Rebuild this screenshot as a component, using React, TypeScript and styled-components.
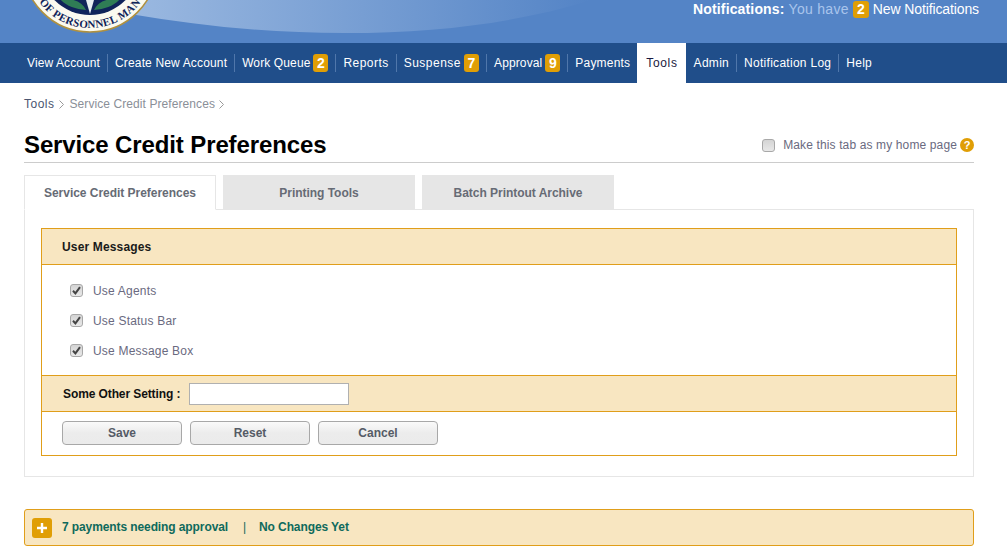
import React from 'react';
import styled, { createGlobalStyle } from 'styled-components';

const GlobalStyle = createGlobalStyle`
  html, body {
    margin: 0;
    padding: 0;
    background: #fff;
    font-family: "Liberation Sans", Arial, sans-serif;
    font-size: 12px;
  }
`;

const Page = styled.div`
  width: 1007px;
  height: 557px;
  overflow: hidden;
`;

// Header
const Header = styled.header`
  position: relative;
  height: 43px;
  background: #5484c6;
  overflow: hidden;
`;

const HeaderArt = styled.svg`
  position: absolute;
  left: 0;
  top: 0;
`;

const Notifications = styled.div`
  position: absolute;
  left: 693px;
  top: 0;
  height: 18px;
  display: flex;
  align-items: center;
  font-size: 14px;
  color: #fff;
  white-space: nowrap;
`;

const NotifyLabel = styled.b`
  margin-right: 4px;
  letter-spacing: 0.15px;
`;

const NotifyMuted = styled.span`
  color: #a9c5ec;
  margin-right: 4px;
  letter-spacing: 0.3px;
`;

const NotifyText = styled.span`
  letter-spacing: -0.12px;
`;

const Badge = styled.span<{ $big?: boolean }>`
  display: inline-flex;
  align-items: center;
  justify-content: center;
  width: ${(p) => (p.$big ? 16 : 15)}px;
  height: ${(p) => (p.$big ? 17 : 18)}px;
  margin-left: ${(p) => (p.$big ? 0 : 3)}px;
  margin-right: ${(p) => (p.$big ? 4 : 0)}px;
  background: #e09e05;
  border-radius: 3px;
  color: #fff;
  font-size: 14px;
  font-weight: bold;
  letter-spacing: 0;
`;

// Main nav
const Nav = styled.nav`
  display: flex;
  align-items: center;
  height: 40px;
  padding-left: 19px;
  background: #204e8a;
`;

const NavItem = styled.a<{ $sep?: boolean; $active?: boolean; $track: number }>`
  display: flex;
  align-items: center;
  height: ${(p) => (p.$active ? 40 : 18)}px;
  padding: 0 ${(p) => (p.$active ? 8 : 7)}px;
  border-left: 1px solid ${(p) => (p.$sep ? '#5077ab' : 'transparent')};
  background: ${(p) => (p.$active ? '#fff' : 'transparent')};
  color: ${(p) => (p.$active ? '#1a1a40' : '#fff')};
  white-space: nowrap;
  letter-spacing: ${(p) => p.$track}px;
`;

// Content
const Main = styled.main`
  width: 950px;
  margin-left: 24px;
`;

const Breadcrumb = styled.div`
  display: flex;
  align-items: center;
  height: 14px;
  margin-top: 14px;
  color: #8a8f98;
`;

const Crumb = styled.span<{ $link?: boolean }>`
  color: ${(p) => (p.$link ? '#4a5570' : '#8a8f98')};
  letter-spacing: ${(p) => (p.$link ? 0.5 : 0.08)}px;
`;

const CrumbArrow = styled.svg`
  margin: 0 6px 0 4px;
`;

const TitleRow = styled.div`
  display: flex;
  align-items: center;
  justify-content: space-between;
  height: 22px;
  margin-top: 23px;
  padding-bottom: 6px;
  border-bottom: 1px solid #ccc;
`;

const Title = styled.h1`
  margin: 0;
  font-size: 24px;
  font-weight: bold;
  letter-spacing: -0.12px;
  color: #000;
`;

const HomeToggle = styled.label`
  display: flex;
  align-items: center;
  color: #6a6a80;
  letter-spacing: 0.13px;
`;

const Box = styled.span<{ $size?: number }>`
  display: flex;
  align-items: center;
  justify-content: center;
  box-sizing: border-box;
  width: ${(p) => p.$size ?? 13}px;
  height: ${(p) => p.$size ?? 13}px;
  border: 1px solid #a8a8a8;
  border-radius: 3px;
  background: linear-gradient(#d4d4d4, #e8e8e8);
`;

const HomeBox = styled(Box)`
  margin-right: 8px;
`;

const Help = styled.span`
  display: flex;
  align-items: center;
  justify-content: center;
  width: 14px;
  height: 14px;
  margin-left: 3px;
  border-radius: 50%;
  background: #e09e05;
  color: #fff;
  font-size: 11px;
  font-weight: bold;
  letter-spacing: 0;
`;

const Tabs = styled.div`
  display: flex;
  gap: 7px;
  height: 35px;
  margin-top: 12px;
  position: relative;
  z-index: 1;
`;

const Tab = styled.div<{ $active?: boolean }>`
  display: flex;
  align-items: center;
  justify-content: center;
  box-sizing: border-box;
  width: 192px;
  height: 35px;
  background: ${(p) => (p.$active ? '#fff' : '#e6e6e6')};
  border: 1px solid #e6e6e6;
  border-bottom: ${(p) => (p.$active ? '1px solid #fff' : '1px solid #e6e6e6')};
  color: #666b75;
  font-weight: bold;
  letter-spacing: -0.03px;
`;

const Panel = styled.section`
  box-sizing: border-box;
  height: 268px;
  margin-top: -1px;
  padding: 18px 16px 0;
  border: 1px solid #e6e6e6;
`;

const Card = styled.div`
  box-sizing: border-box;
  height: 228px;
  border: 1px solid #e09e1a;
`;

const CardHead = styled.div`
  display: flex;
  align-items: center;
  height: 35px;
  padding-left: 20px;
  border-bottom: 1px solid #e09e1a;
  background: #f8e6c1;
  color: #1a1a1a;
  font-weight: bold;
  letter-spacing: 0.15px;
`;

const Options = styled.div`
  display: flex;
  flex-direction: column;
  gap: 17px;
  height: 110px;
  box-sizing: border-box;
  padding: 19px 0 0 28px;
`;

const Option = styled.label`
  display: flex;
  align-items: center;
  height: 13px;
  color: #6a6a80;
  letter-spacing: 0.2px;
`;

const OptionBox = styled(Box)`
  margin-right: 10px;
`;

const SettingRow = styled.div`
  display: flex;
  align-items: center;
  height: 35px;
  padding-left: 21px;
  border-top: 1px solid #e09e1a;
  border-bottom: 1px solid #e09e1a;
  background: #f8e6c1;
  color: #111;
  font-weight: bold;
  letter-spacing: -0.1px;
`;

const TextField = styled.input`
  box-sizing: border-box;
  width: 160px;
  height: 22px;
  margin-left: 9px;
  border: 1px solid #b0b0b0;
  background: #fff;
  outline: none;
`;

const Actions = styled.div`
  display: flex;
  gap: 8px;
  padding: 9px 0 0 20px;
`;

const Button = styled.button`
  box-sizing: border-box;
  width: 120px;
  height: 24px;
  padding: 0;
  border: 1px solid #a8a8a8;
  border-radius: 4px;
  background: linear-gradient(#fafafa, #ececec 50%, #ebebeb);
  color: #555b66;
  font-family: inherit;
  font-size: 12px;
  font-weight: bold;
`;

const Summary = styled.div`
  display: flex;
  align-items: center;
  box-sizing: border-box;
  height: 37px;
  margin-top: 32px;
  padding-left: 7px;
  border: 1px solid #e09e1a;
  border-radius: 3px;
  background: #f8e6c1;
  color: #0f6a5c;
  font-weight: bold;
  letter-spacing: -0.1px;
`;

const SummaryText = styled.span`
  margin-bottom: 2px;
`;

const PlusButton = styled.span`
  display: flex;
  align-items: center;
  justify-content: center;
  width: 20px;
  height: 20px;
  margin-right: 10px;
  border-radius: 3px;
  background: #e09e05;
`;

const Divider = styled.span`
  margin: 0 13px 2px 15px;
  font-weight: normal;
`;

const Check = () => (
  <svg width="9" height="9" viewBox="0 0 9 9">
    <path d="M1 4.8 L3.4 7.4 L8 1.2" fill="none" stroke="#444" strokeWidth="2" />
  </svg>
);

const Arrow = () => (
  <CrumbArrow width="5" height="9" viewBox="0 0 5 9">
    <path d="M0.5 0.5 L4.5 4.5 L0.5 8.5" fill="none" stroke="#9a9a9a" />
  </CrumbArrow>
);

const navItems: { label: string; track: number; badge?: string; sep?: boolean; active?: boolean }[] = [
  { label: 'View Account', track: 0.1 },
  { label: 'Create New Account', track: 0.15, sep: true },
  { label: 'Work Queue', track: 0.12, badge: '2', sep: true },
  { label: 'Reports', track: 0.45, sep: true },
  { label: 'Suspense', track: 0.5, badge: '7', sep: true },
  { label: 'Approval', track: 0.12, badge: '9', sep: true },
  { label: 'Payments', track: 0.2, sep: true },
  { label: 'Tools', track: 0.65, active: true },
  { label: 'Admin', track: 0.3 },
  { label: 'Notification Log', track: 0.28, sep: true },
  { label: 'Help', track: 0.25, sep: true },
];

const Art = () => (
  <HeaderArt width="1007" height="43" viewBox="0 0 1007 43">
    <defs>
      <linearGradient id="swoosh" x1="135" x2="590" y1="0" y2="0" gradientUnits="userSpaceOnUse">
        <stop offset="0" stopColor="#9ab8e0" />
        <stop offset="1" stopColor="#5484c6" />
      </linearGradient>
      <path id="sealText" d="M 27 -35 A 63 63 0 0 0 153 -35" />
    </defs>
    <path d="M130 14 C 200 26 270 33 345 33 C 440 33 520 22 592 0 L130 0 Z" fill="url(#swoosh)" />
    <circle cx="90" cy="-35" r="67" fill="#fbfaf0" stroke="#b0913f" strokeWidth="1.5" />
    <circle cx="90" cy="-35" r="50" fill="#10245a" />
    <path d="M60 -1 C 66 6 75 9 86 10 C 82 2 74 -2 60 -1 Z" fill="#2f7d55" />
    <path d="M120 -1 C 114 6 105 9 94 10 C 98 2 106 -2 120 -1 Z" fill="#2f7d55" />
    <path d="M86 0 L90 14 L94 0 Z" fill="#e8eef2" />
    <text fontFamily='"Liberation Serif", serif' fontWeight="bold" fontSize="11" fill="#10245a" letterSpacing="0.3">
      <textPath href="#sealText" startOffset="50%" textAnchor="middle">
        OF PERSONNEL MAN
      </textPath>
    </text>
  </HeaderArt>
);

const App = () => {
  return (
    <Page>
      <GlobalStyle />
      <Header>
        <Art />
        <Notifications>
          <NotifyLabel>Notifications:</NotifyLabel>
          <NotifyMuted>You have</NotifyMuted>
          <Badge $big>2</Badge>
          <NotifyText>New Notifications</NotifyText>
        </Notifications>
      </Header>
      <Nav>
        {navItems.map((item) => (
          <NavItem key={item.label} $sep={item.sep} $active={item.active} $track={item.track}>
            {item.label}
            {item.badge && <Badge>{item.badge}</Badge>}
          </NavItem>
        ))}
      </Nav>
      <Main>
        <Breadcrumb>
          <Crumb $link>Tools</Crumb>
          <Arrow />
          <Crumb>Service Credit Preferences</Crumb>
          <Arrow />
        </Breadcrumb>
        <TitleRow>
          <Title>Service Credit Preferences</Title>
          <HomeToggle>
            <HomeBox />
            Make this tab as my home page
            <Help>?</Help>
          </HomeToggle>
        </TitleRow>
        <Tabs>
          <Tab $active>Service Credit Preferences</Tab>
          <Tab>Printing Tools</Tab>
          <Tab>Batch Printout Archive</Tab>
        </Tabs>
        <Panel>
          <Card>
            <CardHead>User Messages</CardHead>
            <Options>
              {['Use Agents', 'Use Status Bar', 'Use Message Box'].map((label) => (
                <Option key={label}>
                  <OptionBox>
                    <Check />
                  </OptionBox>
                  {label}
                </Option>
              ))}
            </Options>
            <SettingRow>
              Some Other Setting :
              <TextField type="text" />
            </SettingRow>
            <Actions>
              <Button>Save</Button>
              <Button>Reset</Button>
              <Button>Cancel</Button>
            </Actions>
          </Card>
        </Panel>
        <Summary>
          <PlusButton>
            <svg width="12" height="12" viewBox="0 0 12 12">
              <path d="M6 1 V11 M1 6 H11" stroke="#fff" strokeWidth="2.4" />
            </svg>
          </PlusButton>
          <SummaryText>7 payments needing approval</SummaryText>
          <Divider>|</Divider>
          <SummaryText>No Changes Yet</SummaryText>
        </Summary>
      </Main>
    </Page>
  );
};

export default App;
